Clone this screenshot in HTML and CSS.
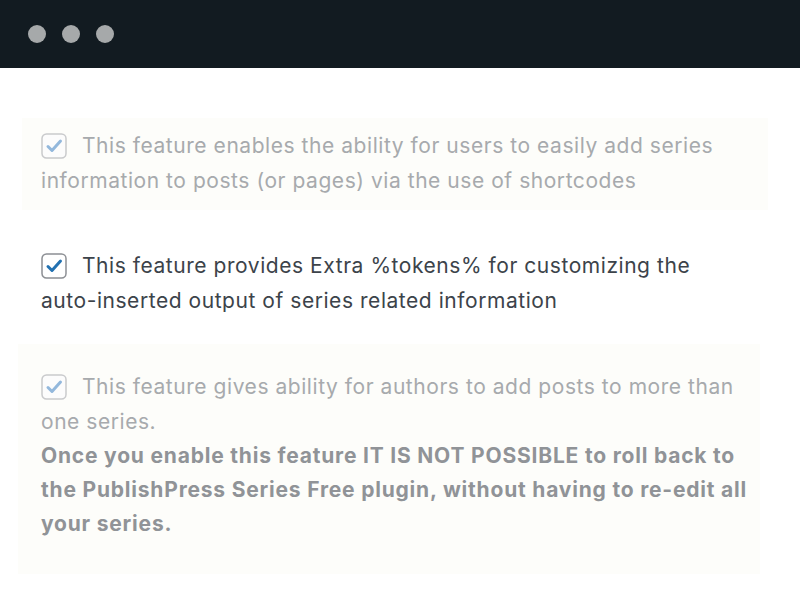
FILE: index.html
```html
<!DOCTYPE html>
<html lang="en">
<head>
  <meta charset="UTF-8" />
  <title>Series Pro features</title>
  <link rel="stylesheet" href="styles.css">
</head>
<body>
  <div class="titlebar">
    <span class="dot"></span>
    <span class="dot"></span>
    <span class="dot"></span>
  </div>

  <div class="content">
    <div class="feature disabled first">
      <p>
        <span class="check">
          <svg viewBox="0 0 26 26" width="26" height="26"><rect x="1" y="1" width="24" height="24" rx="4.5"/><path d="M7 13.5l4 4 8.5-9.5"/></svg>
        </span>This feature enables the ability for users to easily add series<br>
        information to posts (or pages) via the use of shortcodes
      </p>
    </div>

    <div class="feature">
      <p>
        <span class="check">
          <svg viewBox="0 0 26 26" width="26" height="26"><rect x="1" y="1" width="24" height="24" rx="4.5"/><path d="M7 13.5l4 4 8.5-9.5"/></svg>
        </span>This feature provides Extra %tokens% for customizing the<br>
        auto-inserted output of series related information
      </p>
    </div>

    <div class="feature disabled last">
      <p>
        <span class="check">
          <svg viewBox="0 0 26 26" width="26" height="26"><rect x="1" y="1" width="24" height="24" rx="4.5"/><path d="M7 13.5l4 4 8.5-9.5"/></svg>
        </span>This feature gives ability for authors to add posts to more than<br>
        one series.
      </p>
      <p class="warning">Once you enable this feature IT IS NOT POSSIBLE to roll back to<br>
        the PublishPress Series Free plugin, without having to re-edit all<br>
        your series.</p>
    </div>
  </div>
</body>
</html>
```

FILE: styles.css
```css
* {
  box-sizing: border-box;
}
body {
  margin: 0;
  background: #ffffff;
  font-family: Inter, "Open Sans", sans-serif;
  font-size: 21px;
  letter-spacing: 0.55px;
  height: 602px;
  overflow: hidden;
}
.titlebar {
  background: #121b21;
  height: 68px;
  display: flex;
  align-items: center;
  gap: 16px;
  padding-left: 28px;
}
.dot {
  width: 18px;
  height: 18px;
  border-radius: 50%;
  background: #a6a9aa;
}
.content {
  padding: 50px 32px 0 22px;
}
.feature {
  padding: 10px 19px 12px;
  color: #3c434a;
}
.feature p {
  margin: 0;
  line-height: 35px;
  white-space: nowrap;
}
.feature + .feature {
  margin-top: 28px;
}
.feature.disabled {
  background: #fdfdfa;
  color: #a7aaad;
}
.feature.last {
  margin-top: 14px;
  margin-right: 8px;
  margin-left: -4px;
  padding: 25px 19px 33px 23px;
}
.check {
  display: inline-block;
  width: 26px;
  height: 26px;
  margin-right: 15px;
  vertical-align: -6px;
}
.check svg {
  display: block;
}
.check rect {
  fill: #fff;
  stroke: #8c8f94;
  stroke-width: 1.5;
}
.check path {
  fill: none;
  stroke: #2271b1;
  stroke-width: 3;
  stroke-linecap: round;
  stroke-linejoin: round;
}
.disabled .check rect {
  stroke: #c9cacc;
  fill: #fcfcfc;
}
.disabled .check path {
  stroke: #93b8dc;
}
.warning {
  font-weight: 700;
  letter-spacing: 0.8px;
  color: #909397;
}
.feature p.warning {
  line-height: 34px;
}
```
